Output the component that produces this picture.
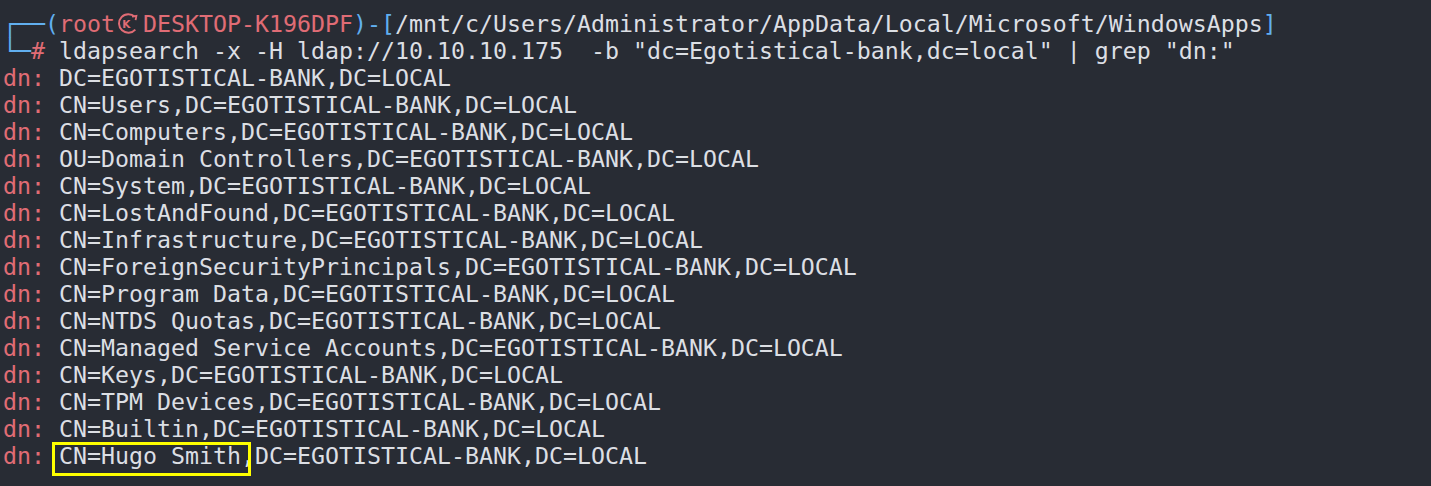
import React from "react";

const rows = [
  "DC=EGOTISTICAL-BANK,DC=LOCAL",
  "CN=Users,DC=EGOTISTICAL-BANK,DC=LOCAL",
  "CN=Computers,DC=EGOTISTICAL-BANK,DC=LOCAL",
  "OU=Domain Controllers,DC=EGOTISTICAL-BANK,DC=LOCAL",
  "CN=System,DC=EGOTISTICAL-BANK,DC=LOCAL",
  "CN=LostAndFound,DC=EGOTISTICAL-BANK,DC=LOCAL",
  "CN=Infrastructure,DC=EGOTISTICAL-BANK,DC=LOCAL",
  "CN=ForeignSecurityPrincipals,DC=EGOTISTICAL-BANK,DC=LOCAL",
  "CN=Program Data,DC=EGOTISTICAL-BANK,DC=LOCAL",
  "CN=NTDS Quotas,DC=EGOTISTICAL-BANK,DC=LOCAL",
  "CN=Managed Service Accounts,DC=EGOTISTICAL-BANK,DC=LOCAL",
  "CN=Keys,DC=EGOTISTICAL-BANK,DC=LOCAL",
  "CN=TPM Devices,DC=EGOTISTICAL-BANK,DC=LOCAL",
  "CN=Builtin,DC=EGOTISTICAL-BANK,DC=LOCAL",
  "CN=Hugo Smith,DC=EGOTISTICAL-BANK,DC=LOCAL",
];

function KaliMark() {
  return (
    <span className="inline-block w-[2ch] h-[27px] align-top relative">
      <svg
        width="28"
        height="27"
        viewBox="0 0 28 27"
        className="absolute left-0 top-0"
      >
        <path
          d="M19.8 6.8 A9.3 9.3 0 1 0 20.3 19.6"
          fill="none"
          stroke="#e06c75"
          strokeWidth="2"
        />
        <path d="M17 6.6 L21.4 5.8 L20.6 10.2" fill="none" stroke="#e06c75" strokeWidth="1.8" />
        <text
          x="11.3"
          y="18.2"
          textAnchor="middle"
          fontFamily="'DejaVu Sans', sans-serif"
          fontWeight="bold"
          fontSize="10.5"
          fill="#e06c75"
        >
          K
        </text>
      </svg>
    </span>
  );
}

export default function App() {
  return (
    <div className="relative w-[1431px] h-[486px] bg-[#282c34] overflow-hidden">
      <div className="pt-[10px] pl-[3px] font-['DejaVu_Sans_Mono',monospace] text-[23.25px] leading-[27px] whitespace-pre text-[#dcdfe4]">
        <div className="h-[27px]">
          <span className="text-[#61afef]">┌──(</span>
          <span className="text-[#e06c75]">root</span>
          <KaliMark />
          <span className="text-[#e06c75]">DESKTOP-K196DPF</span>
          <span className="text-[#61afef]">)-[</span>
          <span>/mnt/c/Users/Administrator/AppData/Local/Microsoft/WindowsApps</span>
          <span className="text-[#61afef]">]</span>
        </div>
        <div className="h-[27px]">
          <span className="text-[#61afef]">└─</span>
          <span className="text-[#e06c75]">#</span>
          <span>{' ldapsearch -x -H ldap://10.10.10.175  -b "dc=Egotistical-bank,dc=local" | grep "dn:"'}</span>
        </div>
        {rows.map((r, i) => (
          <div key={i} className="h-[27px]">
            <span className="text-[#e06c75]">dn:</span>
            <span>{" " + r}</span>
          </div>
        ))}
      </div>
      <div className="absolute left-[52px] top-[442px] w-[199px] h-[34px] border-[3px] border-[#ffff00]" />
    </div>
  );
}
